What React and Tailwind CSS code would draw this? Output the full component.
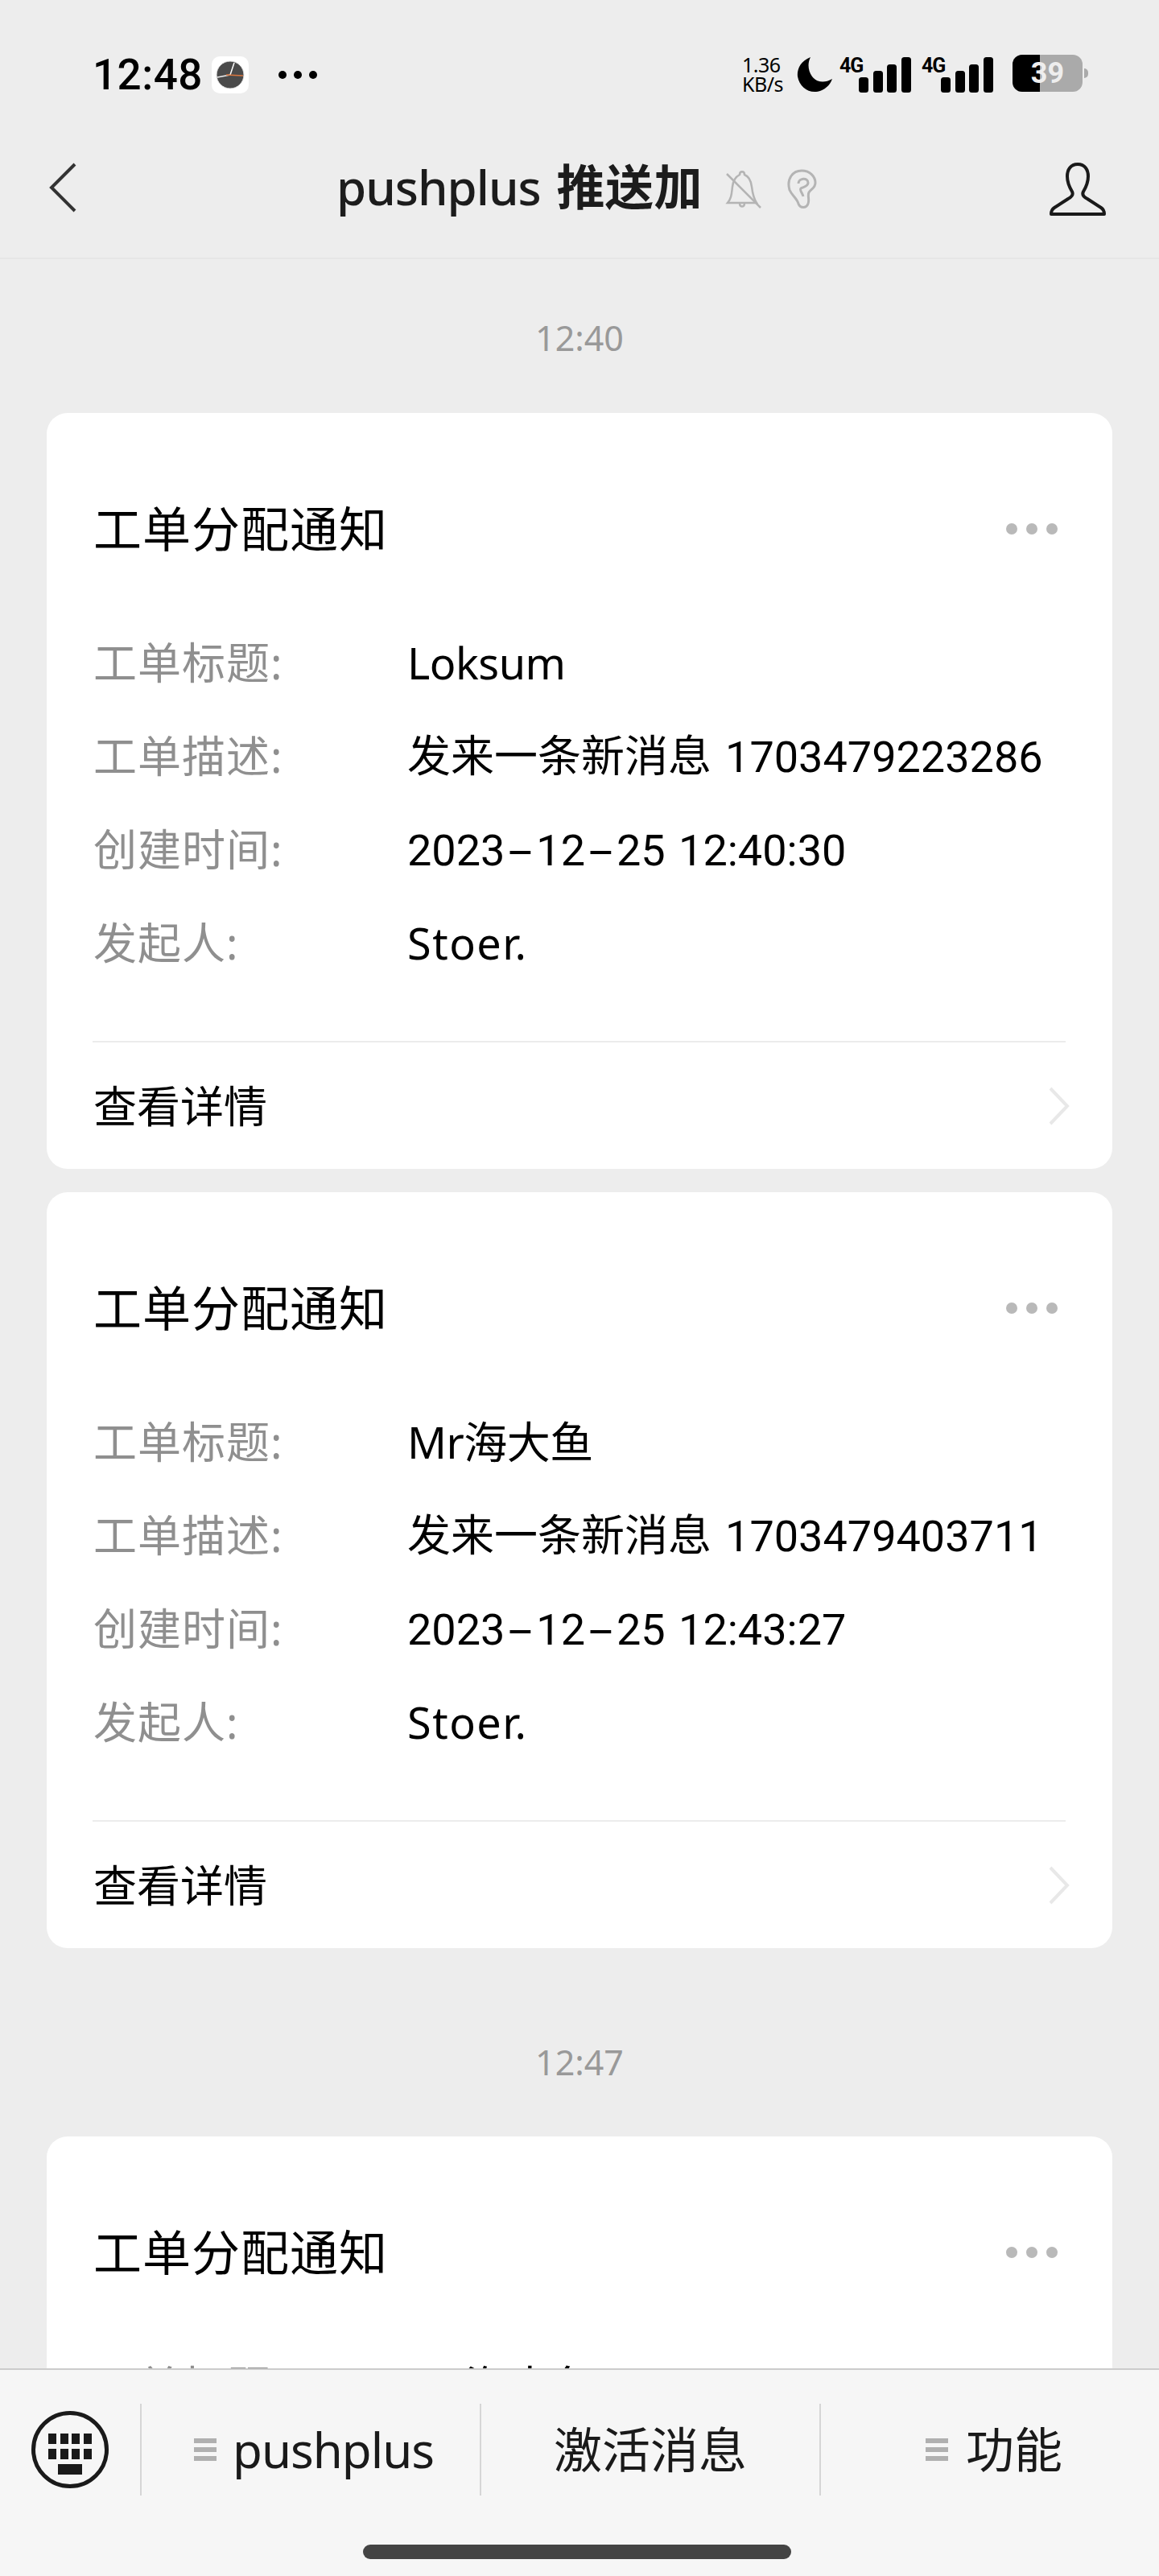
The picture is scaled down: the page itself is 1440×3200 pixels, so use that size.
import React from 'react';

const font = { fontFamily: '"Noto Sans", "Noto Sans CJK SC", sans-serif' };
const digits = { fontFamily: 'Roboto, sans-serif' };

const Dash = () => <span className="inline-block mx-[12px] scale-x-[2]">-</span>;

const Stamp = ({ children, className }) => (
  <div className={`h-[60px] shrink-0 flex items-center justify-center text-[43px] text-[#999999] ${className}`}>{children}</div>
);

const Signal = () => (
  <div className="relative w-[87px] h-[44px]">
    <span className="absolute left-[-3px] top-[-2px] text-[25px] leading-[26px] font-bold text-black tracking-[-1px]" style={digits}>4G</span>
    <svg className="absolute left-0 top-0" width="87" height="44" viewBox="0 0 87 44">
      <rect x="21" y="25" width="12" height="19" rx="3.5" fill="#000" />
      <rect x="39" y="17" width="12" height="27" rx="3.5" fill="#000" />
      <rect x="56" y="9" width="12" height="35" rx="3.5" fill="#000" />
      <rect x="74" y="0" width="12" height="44" rx="3.5" fill="#000" />
    </svg>
  </div>
);

const StatusBar = () => (
  <div className="h-[152px] flex items-start pt-[68px] pl-[115px] pr-[88px]">
    <span className="text-[53px] leading-[50px] font-medium text-black tracking-[0.5px]" style={digits}>12:48</span>
    <svg className="ml-[11px] mt-[2px]" width="46" height="46" viewBox="0 0 46 46">
      <rect width="46" height="46" rx="10" fill="#fff" />
      <circle cx="23" cy="23" r="17" fill="#4a4a4a" stroke="#e8e8e8" strokeWidth="1" />
      <path d="M23 23 L28 8" stroke="#fff" strokeWidth="1.5" />
      <path d="M23 23 L7 26" stroke="#eee" strokeWidth="1.5" />
      <path d="M18 23 L39 24" stroke="#d9763f" strokeWidth="1.5" />
    </svg>
    <div className="ml-[37px] mt-[20px] flex gap-[9px]">
      <span className="w-[10px] h-[10px] rounded-full bg-black" />
      <span className="w-[10px] h-[10px] rounded-full bg-black" />
      <span className="w-[10px] h-[10px] rounded-full bg-black" />
    </div>
    <div className="ml-auto flex items-start">
      <div className="w-[60px] mr-[2px] text-[25px] leading-[24px] text-black text-left tracking-[-0.5px]" style={{ fontFamily: '"Noto Sans", sans-serif' }}>1.36<br />KB/s</div>
      <svg className="ml-[6px] mt-[3px]" width="45" height="44" viewBox="0 0 45 44">
        <path d="M17 0 C4 5 0 16 1 24 C3 36 13 44 24 43 C33 42 41 36 44 27 C34 33 24 31 19 24 C14 17 13 8 17 0 Z" fill="#000" />
      </svg>
      <div className="ml-[11px] mt-[3px]"><Signal /></div>
      <div className="ml-[15px] mt-[3px]"><Signal /></div>
      <div className="relative ml-[23px] w-[87px] h-[46px] rounded-[12px] bg-[#aaaaaa] overflow-hidden flex items-center justify-center">
        <div className="absolute left-0 top-0 bottom-0 w-[34px] bg-black" />
        <span className="relative text-[36px] leading-[46px] font-bold text-[#eeeeee]" style={digits}>39</span>
      </div>
      <div className="ml-[2px] mt-[17px] w-[5px] h-[12px] rounded-r-full bg-[#aaaaaa]" />
    </div>
  </div>
);

const NavBar = () => (
  <div className="h-[170px] border-b-2 border-[#e6e6e6] flex items-start relative">
    <svg className="ml-[60px] mt-[50px]" width="36" height="62" viewBox="0 0 36 62" fill="none">
      <path d="M33 2 L4 31 L33 60" stroke="#333" strokeWidth="4" />
    </svg>
    <div className="ml-[322px] mt-[44px] flex items-start">
      <span className="text-[60px] leading-[72px] font-medium text-[#1c1c1c] whitespace-nowrap">
        <span className="tracking-[-1px]">pushplus</span> <span className="ml-[4px] font-bold tracking-[0.5px]">推送加</span>
      </span>
      <svg className="ml-[28px] mt-[14px]" width="46" height="50" viewBox="0 0 46 50" fill="none" stroke="#b4b4b4" strokeWidth="2.5">
        <path d="M3 42 C8 36 8 30 9 22 C10 13 14 9 18 7 C18 2 24 2 24 7 C29 9 32 14 33 22 C34 30 35 36 39 42 Z" />
        <path d="M18 42 C18 48 24 48 24 42" />
        <path d="M2 6 L44 48" />
      </svg>
      <svg className="ml-[30px] mt-[14px]" width="38" height="50" viewBox="0 0 38 50" fill="none" stroke="#b4b4b4" strokeWidth="3">
        <path d="M4 26 C0 12 8 2 19 2 C30 2 36 10 36 17 C36 24 31 24 28 29 C26 33 29 38 27 43 C25 49 17 49 15 43 C13 36 7 33 4 26 Z" />
        <path d="M15 18 C15 11 27 10 27 17 C27 22 21 22 18 24 C16 26 20 30 21 34" />
      </svg>
    </div>
    <svg className="absolute right-[66px] top-[50px]" width="70" height="66" viewBox="0 0 70 66" fill="none">
      <path d="M35 2 C26 2 22 9 22 17 C22 24 25 31 28 36 C30 40 27 43 23 45 L6 56 C3 58 2 60 2 64 L68 64 C68 60 67 58 64 56 L47 45 C43 43 40 40 42 36 C45 31 48 24 48 17 C48 9 44 2 35 2 Z" stroke="#1a1a1a" strokeWidth="4" strokeLinejoin="round" />
    </svg>
  </div>
);

const Row = ({ label, children }) => (
  <div className="h-[116px] flex items-center">
    <span className="w-[390px] text-[54px] text-[#8f8f8f] whitespace-nowrap tracking-[1px]">{label}</span>
    <span className="text-[54px] text-black whitespace-nowrap">{children}</span>
  </div>
);

const Desc = ({ id }) => (
  <>发来一条新消息 <span className="ml-[3px]" style={digits}>{id}</span></>
);

const Time = ({ time }) => (
  <span style={digits}>2023<Dash />12<Dash />25 <span className="ml-[3px]">{time}</span></span>
);

const CardHead = () => (
  <div className="h-[80px] flex items-center justify-between">
    <span className="text-[60px] text-black tracking-[1px]">工单分配通知</span>
    <div className="flex gap-[11px] mr-[10px]">
      <span className="w-[14px] h-[14px] rounded-full bg-[#b9b9b9]" />
      <span className="w-[14px] h-[14px] rounded-full bg-[#b9b9b9]" />
      <span className="w-[14px] h-[14px] rounded-full bg-[#b9b9b9]" />
    </div>
  </div>
);

const Card = ({ title, id, time }) => (
  <div className="mx-[58px] h-[939px] shrink-0 bg-white rounded-[26px] pt-[104px] pl-[58px] pr-[58px]">
    <CardHead />
    <div className="mt-[68px]">
      <Row label="工单标题:"><span className="tracking-[-0.5px]">{title}</span></Row>
      <Row label="工单描述:"><Desc id={id} /></Row>
      <Row label="创建时间:"><Time time={time} /></Row>
      <Row label="发起人:"><span className="tracking-[1.5px]">Stoer.</span></Row>
    </div>
    <div className="mt-[64px] ml-[-1px] h-[2px] bg-[#ececec]" />
    <div className="h-[158px] flex items-center justify-between">
      <span className="text-[54px] text-black">查看详情</span>
      <svg className="mr-[-5px]" width="26" height="48" viewBox="0 0 26 48" fill="none">
        <path d="M2 2 L23 24 L2 46" stroke="#e8e8e8" strokeWidth="4" />
      </svg>
    </div>
  </div>
);

const MenuIcon = () => (
  <div className="flex flex-col gap-[5px] w-[28px] shrink-0">
    <span className="h-[6px] bg-[#b0b0b0]" />
    <span className="h-[6px] bg-[#b0b0b0]" />
    <span className="h-[6px] bg-[#b0b0b0]" />
  </div>
);

const BottomBar = () => (
  <div className="h-[258px] shrink-0 border-t-2 border-[#cccccc] bg-[#f6f6f6] relative z-10">
    <div className="mt-[42px] h-[114px] flex">
      <div className="w-[174px] flex items-center pl-[39px] shrink-0">
        <svg width="96" height="96" viewBox="0 0 96 96">
          <circle cx="48" cy="48" r="45.5" fill="none" stroke="#1a1a1a" strokeWidth="5" />
          <g fill="#1a1a1a">
            <rect x="21" y="28" width="10" height="13" />
            <rect x="36" y="28" width="10" height="13" />
            <rect x="50" y="28" width="10" height="13" />
            <rect x="65" y="28" width="10" height="13" />
            <rect x="21" y="47" width="10" height="13" />
            <rect x="36" y="47" width="10" height="13" />
            <rect x="50" y="47" width="10" height="13" />
            <rect x="65" y="47" width="10" height="13" />
            <rect x="33" y="66" width="30" height="13" />
          </g>
        </svg>
      </div>
      <div className="w-[422px] shrink-0 border-l-2 border-[#d6d6d6] flex items-center pl-[65px]">
        <MenuIcon />
        <span className="ml-[20px] text-[60px] leading-none text-[#1a1a1a] tracking-[-1px]">pushplus</span>
      </div>
      <div className="w-[422px] shrink-0 border-l-2 border-[#d6d6d6] flex items-center justify-center">
        <span className="text-[60px] leading-none text-[#1a1a1a]">激活消息</span>
      </div>
      <div className="flex-1 border-l-2 border-[#d6d6d6] flex items-center pl-[130px]">
        <MenuIcon />
        <span className="ml-[22px] text-[60px] leading-none text-[#1a1a1a]">功能</span>
      </div>
    </div>
    <div className="mt-[61px] ml-[451px] w-[532px] h-[18px] rounded-full bg-[#444444]" />
  </div>
);

export default function App() {
  return (
    <div className="w-[1440px] h-[3200px] flex flex-col overflow-hidden bg-[#ededed]" style={font}>
      <StatusBar />
      <NavBar />
      <div className="flex-1 min-h-0 overflow-hidden flex flex-col pt-[68px]">
        <Stamp className="mb-[63px]">12:40</Stamp>
        <Card title="Loksum" id="1703479223286" time="12:40:30" />
        <div className="h-[29px] shrink-0" />
        <Card title="Mr海大鱼" id="1703479403711" time="12:43:27" />
        <Stamp className="mt-[112px] mb-[62px]">12:47</Stamp>
        <div className="mx-[58px] h-[400px] shrink-0 bg-white rounded-t-[26px] pt-[104px] px-[58px]">
          <CardHead />
          <div className="mt-[68px]">
            <Row label="工单标题:">Mr海大鱼</Row>
          </div>
        </div>
      </div>
      <BottomBar />
    </div>
  );
}
